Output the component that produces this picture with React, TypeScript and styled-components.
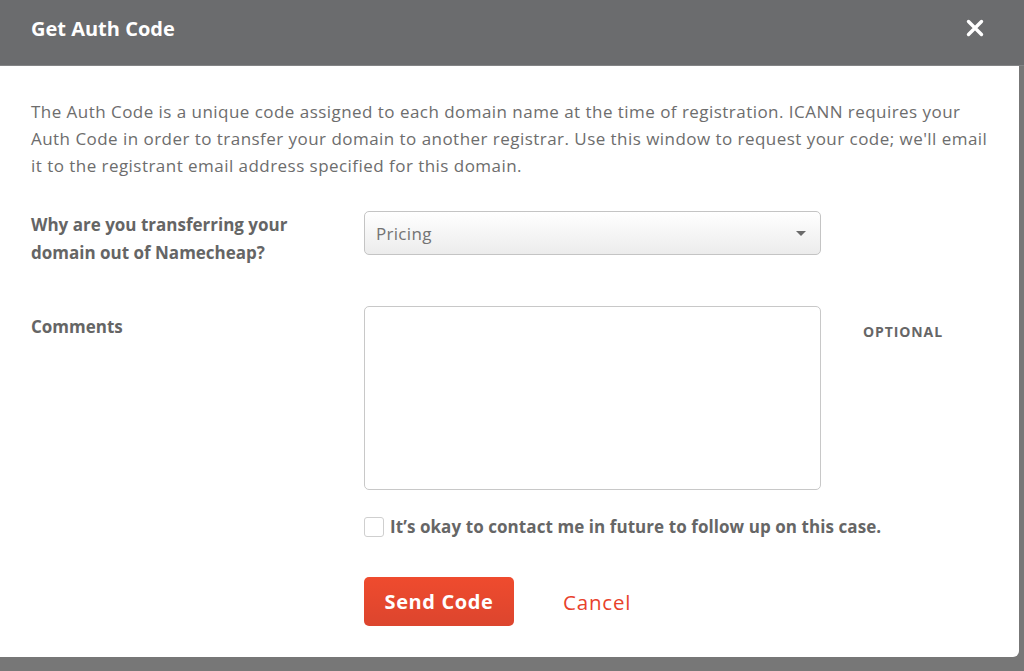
import React from "react";
import styled, { createGlobalStyle } from "styled-components";

const Global = createGlobalStyle`
  html, body { margin: 0; padding: 0; }
  body {
    background: #777777;
    font-family: "Open Sans", "Liberation Sans", sans-serif;
    width: 1024px;
    height: 671px;
    overflow: hidden;
  }
  * { box-sizing: border-box; }
`;

const Page = styled.div`
  width: 1024px;
  height: 671px;
  display: flex;
  flex-direction: column;
`;

const Header = styled.div`
  height: 66px;
  background: #6b6c6e;
  display: flex;
  align-items: center;
  justify-content: space-between;
  padding: 0 40px 9px 31px;
  border-bottom: 1px solid #838486;
`;

const Title = styled.h1`
  margin: 0;
  color: #ffffff;
  font-size: 20px;
  font-weight: 700;
  letter-spacing: 0px;
`;

const Close = styled.button`
  border: 0;
  background: transparent;
  padding: 0;
  width: 18px;
  height: 18px;
  display: flex;
  cursor: pointer;
`;

const Body = styled.div`
  width: 1019px;
  height: 591px;
  background: #ffffff;
  border-bottom-right-radius: 6px;
  padding: 32px 31px 0 31px;
  display: flex;
  flex-direction: column;
`;

const Intro = styled.p`
  margin: 0;
  color: #6d6d6d;
  font-size: 17px;
  line-height: 27px;
  letter-spacing: 0.46px;
  white-space: nowrap;
`;

const FormGrid = styled.div`
  margin-top: 32px;
  display: grid;
  grid-template-columns: 333px 457px auto;
  align-items: start;
`;

const Label = styled.label<{ $top?: number }>`
  color: #656565;
  font-size: 17px;
  font-weight: 700;
  line-height: 28px;
  padding-top: ${(p) => p.$top ?? 0}px;
  letter-spacing: 0px;
`;

const SelectBox = styled.div`
  height: 44px;
  border: 1px solid #c4c4c4;
  border-radius: 5px;
  background: linear-gradient(#ffffff, #ececec);
  display: flex;
  align-items: center;
  justify-content: space-between;
  padding: 0 14px 0 11px;
  color: #737373;
  font-size: 17px;
  letter-spacing: 0.3px;
`;

const Caret = styled.span`
  width: 0;
  height: 0;
  border-left: 5px solid transparent;
  border-right: 5px solid transparent;
  border-top: 5px solid #6a6a6a;
`;

const Spacer = styled.div<{ $h: number }>`
  grid-column: 1 / -1;
  height: ${(p) => p.$h}px;
`;

const TextArea = styled.textarea`
  height: 184px;
  width: 457px;
  border: 1px solid #c8c8c8;
  border-radius: 5px;
  resize: none;
  display: block;
  outline: none;
`;

const Optional = styled.span`
  padding: 16px 0 0 42px;
  color: #666666;
  font-size: 14px;
  font-weight: 700;
  letter-spacing: 0.9px;
`;

const CheckRow = styled.label`
  display: flex;
  align-items: center;
  gap: 6px;
  color: #666666;
  font-size: 17px;
  font-weight: 700;
  letter-spacing: 0.07px;
  white-space: nowrap;
`;

const CheckBox = styled.span`
  width: 20px;
  height: 20px;
  border: 1px solid #cfcfcf;
  border-radius: 3px;
  background: #ffffff;
  flex: none;
`;

const Actions = styled.div`
  display: flex;
  align-items: center;
  gap: 49px;
`;

const SendButton = styled.button`
  width: 150px;
  height: 49px;
  border: 0;
  border-radius: 5px;
  background: linear-gradient(#ef4b2e, #dc452e);
  color: #ffffff;
  font-family: inherit;
  font-size: 20px;
  font-weight: 700;
  letter-spacing: 0.6px;
  cursor: pointer;
`;

const CancelLink = styled.a`
  color: #e8412b;
  font-size: 20.5px;
  letter-spacing: 0.8px;
  text-decoration: none;
  cursor: pointer;
`;

export default function App() {
  return (
    <>
      <Global />
      <Page>
        <Header>
          <Title>Get Auth Code</Title>
          <Close aria-label="Close">
            <svg width="18" height="18" viewBox="0 0 18 18">
              <path d="M2.5 2.5 L15.5 15.5 M15.5 2.5 L2.5 15.5" stroke="#ffffff" strokeWidth="3.4" strokeLinecap="round" />
            </svg>
          </Close>
        </Header>
        <Body>
          <Intro>
            The Auth Code is a unique code assigned to each domain name at the time of registration. ICANN requires your
            <br />
            Auth Code in order to transfer your domain to another registrar. Use this window to request your code; we'll email
            <br />
            it to the registrant email address specified for this domain.
          </Intro>
          <FormGrid>
            <Label $top={0}>
              Why are you transferring your
              <br />
              domain out of Namecheap?
            </Label>
            <SelectBox>
              <span>Pricing</span>
              <Caret />
            </SelectBox>
            <div />
            <Spacer $h={39} />
            <Label $top={7}>Comments</Label>
            <TextArea />
            <Optional>OPTIONAL</Optional>
            <Spacer $h={25} />
            <div />
            <CheckRow>
              <CheckBox />
              It’s okay to contact me in future to follow up on this case.
            </CheckRow>
            <div />
            <Spacer $h={39} />
            <div />
            <Actions>
              <SendButton>Send Code</SendButton>
              <CancelLink>Cancel</CancelLink>
            </Actions>
            <div />
          </FormGrid>
        </Body>
      </Page>
    </>
  );
}
